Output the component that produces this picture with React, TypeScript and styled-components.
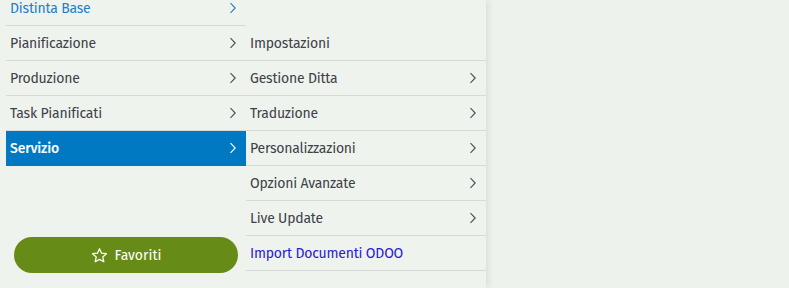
import React from 'react';
import styled, { createGlobalStyle } from 'styled-components';

const GlobalStyle = createGlobalStyle`
  html, body {
    margin: 0;
    padding: 0;
    background-color: #eef2ed;
    font-family: 'Fira Sans', 'Noto Sans', 'Open Sans', sans-serif;
  }
`;

const Page = styled.div`
  display: flex;
  width: 789px;
  height: 288px;
  overflow: hidden;
  background-color: #eef2ed;
`;
const Menu = styled.div`
  display: flex;
  width: 486px;
  height: 100%;
  background-color: #eff3ee;
  box-shadow: 3px 0 6px rgba(0, 0, 0, 0.07);
`;
const LeftColumn = styled.div`
  display: flex;
  flex-direction: column;
  justify-content: space-between;
  width: 240px;
  margin-left: 6px;
  padding-bottom: 15px;
  box-sizing: border-box;
`;
const List = styled.div<{ offset: number }>`
  display: flex;
  flex-direction: column;
  margin-top: ${(props) => props.offset}px;
`;
const RightColumn = styled.div`
  display: flex;
  flex-direction: column;
  width: 240px;
  padding-top: 26px;
`;
const Row = styled.div<{ active?: boolean; divider?: boolean }>`
  display: flex;
  align-items: center;
  justify-content: space-between;
  height: 35px;
  padding: 0 9px 0 4px;
  box-sizing: border-box;
  border-bottom: 1px solid
    ${(props) => (props.divider ? '#d6dad6' : 'transparent')};
  background-color: ${(props) => (props.active ? '#0078c2' : 'transparent')};
  cursor: pointer;
`;
const Label = styled.span<{ tone: 'default' | 'active' | 'section' | 'link' }>`
  font-size: 14px;
  letter-spacing: -0.2px;
  font-weight: ${(props) => (props.tone === 'active' ? 500 : 400)};
  color: ${(props) =>
    props.tone === 'active'
      ? '#ffffff'
      : props.tone === 'section'
      ? '#1d80c8'
      : props.tone === 'link'
      ? '#2a20d6'
      : '#3d4148'};
`;
const FavButton = styled.div`
  display: flex;
  align-items: center;
  justify-content: center;
  gap: 7px;
  height: 36px;
  margin: 0 8px;
  border-radius: 18px;
  background-color: #668c17;
  color: #ffffff;
  font-size: 14px;
  font-weight: 400;
  cursor: pointer;
`;

const Chevron: React.FC<{ color: string }> = ({ color }) => (
  <svg width="8" height="12" viewBox="0 0 8 12">
    <path
      d="M1.5 1.2 L6.2 6 L1.5 10.8"
      fill="none"
      stroke={color}
      strokeWidth="1.1"
    />
  </svg>
);

const Star = () => (
  <svg width="17" height="17" viewBox="0 0 24 24">
    <path
      d="M12 2.5l2.9 6.3 6.9.7-5.2 4.6 1.5 6.8L12 17.4l-6.1 3.5 1.5-6.8-5.2-4.6 6.9-.7z"
      fill="none"
      stroke="#ffffff"
      strokeWidth="1.8"
      strokeLinejoin="round"
    />
  </svg>
);

const leftItems = [
  { label: 'Distinta Base', tone: 'section' as const },
  { label: 'Pianificazione', tone: 'default' as const },
  { label: 'Produzione', tone: 'default' as const },
  { label: 'Task Pianificati', tone: 'default' as const },
  { label: 'Servizio', tone: 'active' as const },
];

const rightItems = [
  { label: 'Impostazioni', sub: false, link: false },
  { label: 'Gestione Ditta', sub: true, link: false },
  { label: 'Traduzione', sub: true, link: false },
  { label: 'Personalizzazioni', sub: true, link: false },
  { label: 'Opzioni Avanzate', sub: true, link: false },
  { label: 'Live Update', sub: true, link: false },
  { label: 'Import Documenti ODOO', sub: false, link: true },
];

export default function App() {
  return (
    <>
      <GlobalStyle />
      <Page>
        <Menu>
          <LeftColumn>
            <List offset={-9}>
              {leftItems.map((item) => (
                <Row
                  key={item.label}
                  active={item.tone === 'active'}
                  divider={item.tone !== 'active'}
                >
                  <Label tone={item.tone}>{item.label}</Label>
                  <Chevron
                    color={
                      item.tone === 'active'
                        ? '#ffffff'
                        : item.tone === 'section'
                        ? '#1d80c8'
                        : '#4a4e55'
                    }
                  />
                </Row>
              ))}
            </List>
            <FavButton>
              <Star />
              Favoriti
            </FavButton>
          </LeftColumn>
          <RightColumn>
            {rightItems.map((item) => (
              <Row key={item.label} divider>
                <Label tone={item.link ? 'link' : 'default'}>{item.label}</Label>
                {item.sub && <Chevron color="#4a4e55" />}
              </Row>
            ))}
          </RightColumn>
        </Menu>
      </Page>
    </>
  );
}
